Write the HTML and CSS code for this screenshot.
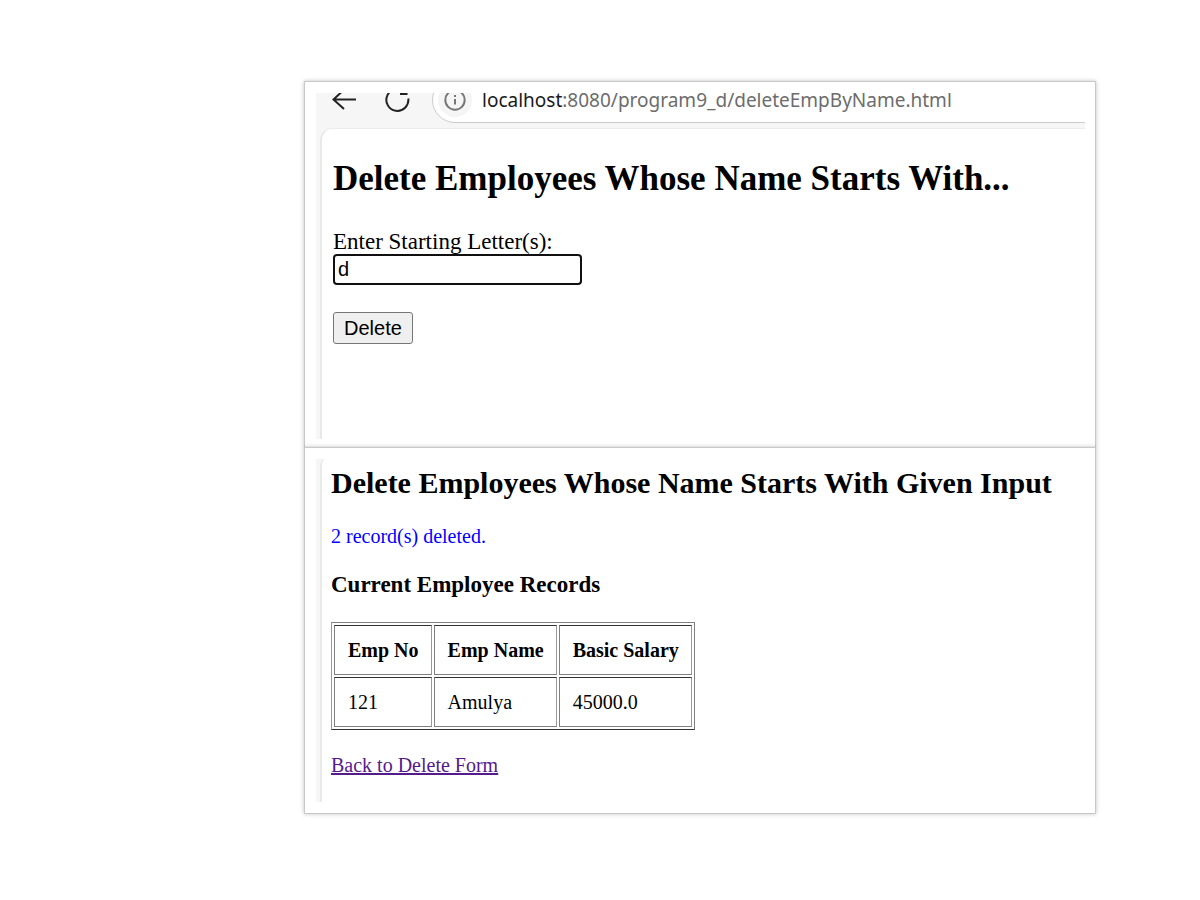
FILE: index.html
```html
<!DOCTYPE html>
<html lang="en">
<head>
<meta charset="utf-8">
<title>Delete Employees</title>
<link rel="stylesheet" href="styles.css">
</head>
<body>
<main class="sheets">
  <section class="card">
    <div class="window">
      <div class="toolbar">
        <button class="tool" type="button" aria-label="Back">
          <svg width="26" height="22" viewBox="0 0 26 22"><path d="M25 11.500H2.500M10.500 4L2.500 11.500L13 21" /></svg>
        </button>
        <button class="tool" type="button" aria-label="Reload">
          <svg width="26" height="26" viewBox="0 0 26 26"><path d="M20.500 5.500A11 11 0 1 0 24.300 12.500M22.500 1V8H16" /></svg>
        </button>
        <div class="address">
          <span class="site-info">
            <svg width="22" height="22" viewBox="0 0 22 22"><circle cx="11" cy="11" r="9.700" /><path d="M11 10V15.500M11 6V8" /></svg>
          </span>
          <span class="url"><span class="host">localhost</span>:8080/program9_d/deleteEmpByName.html</span>
        </div>
      </div>
      <div class="page form-page">
        <h1 class="form-title">Delete Employees Whose Name Starts With...</h1>
        <form class="form">
          <label class="label" for="letters">Enter Starting Letter(s):</label>
          <input class="field" id="letters" type="text" value="d">
          <button class="delete" type="submit">Delete</button>
        </form>
      </div>
    </div>
  </section>
  <section class="card result-card">
    <div class="window">
      <div class="page result-page">
        <h2 class="result-title">Delete Employees Whose Name Starts With Given Input</h2>
        <p class="message">2 record(s) deleted.</p>
        <h3 class="subtitle">Current Employee Records</h3>
        <table class="records">
          <thead><tr><th>Emp No</th><th>Emp Name</th><th>Basic Salary</th></tr></thead>
          <tbody><tr><td>121</td><td>Amulya</td><td>45000.0</td></tr></tbody>
        </table>
        <a class="back-link" href="#letters">Back to Delete Form</a>
      </div>
    </div>
  </section>
</main>
</body>
</html>
```
FILE: styles.css
```css
* { box-sizing: border-box; }
body {
  margin: 0;
  background: #fff;
  color: #000;
  font-family: "Liberation Serif", "Times New Roman", serif;
  font-size: 20px;
}
h1, h2, h3, p { margin: 0; }
.sheets { margin: 81px 104px 81px 304px; }
.card {
  padding: 11px 10px 8px 11px;
  background: #fff;
  border: 1px solid #c8c8c8;
  box-shadow: 0 0 4px rgba(0, 0, 0, 0.25);
}
.card:first-child { border-bottom: 0; }
.result-card { padding-bottom: 11px; }
.window { background: #f6f6f6; overflow: hidden; }
.toolbar { display: flex; align-items: flex-start; height: 35px; }
.tool {
  display: flex;
  margin: -5px 0 0 15px;
  padding: 0;
  border: 0;
  background: none;
}
.tool + .tool { margin: -7px 0 0 27px; }
.tool svg { fill: none; stroke: #222; stroke-width: 2; }
.address {
  display: flex;
  flex: 1;
  align-items: center;
  min-width: 0;
  height: 46px;
  margin: -16px -2px 0 22px;
  padding-left: 5px;
  background: #fff;
  border: 1px solid #ccc;
  border-radius: 23px 0 0 23px;
}
.site-info {
  display: flex;
  align-items: center;
  justify-content: center;
  width: 34px;
  height: 34px;
  border-radius: 50%;
  background: #f5f5f5;
}
.site-info svg { fill: none; stroke: #777; stroke-width: 2; }
.url {
  margin-left: 10px;
  color: #6c6c6c;
  font-family: "Noto Sans", sans-serif;
  font-size: 19px;
  line-height: 28px;
  white-space: nowrap;
}
.host { color: #1a1a1a; }
.page { margin-left: 4px; background: #fff; border-left: 2px solid #e9e9e9; }
.form-page {
  padding: 29px 0 95px 11px;
  border-top: 1px solid #ececec;
  border-radius: 12px 0 0 0;
}
.form-title { font-size: 35px; line-height: 42px; }
.form { display: flex; flex-direction: column; align-items: flex-start; }
.label { margin-top: 30px; font-size: 23px; line-height: 24px; }
.field {
  width: 249px;
  height: 31px;
  padding: 0 3px;
  border: 2px solid #101010;
  border-radius: 4px;
  outline: 0;
  font-family: "Liberation Sans", Arial, sans-serif;
  font-size: 20px;
}
.delete {
  height: 32px;
  margin-top: 27px;
  padding: 0 10px;
  border: 1px solid #767676;
  border-radius: 3px;
  background: #efefef;
  color: #000;
  font-family: "Liberation Sans", Arial, sans-serif;
  font-size: 20px;
}
.result-page { padding: 7px 0 25px 9px; border-radius: 6px 0 0 0; }
.result-title { font-size: 30px; line-height: 34px; }
.message { margin-top: 24px; color: #00f; line-height: 24px; }
.subtitle { margin-top: 23px; font-size: 23px; line-height: 28px; }
.records {
  margin: 23px 0;
  border: 1px solid;
  border-color: #808080 #808080 #333 #999;
  border-spacing: 2px;
  line-height: 24px;
}
.records th, .records td {
  padding: 12px 12px 12px 13px;
  border: 1px solid;
  border-color: #333 #999 #808080 #808080;
  text-align: left;
}
.back-link { color: #551a8b; line-height: 24px; }
```
